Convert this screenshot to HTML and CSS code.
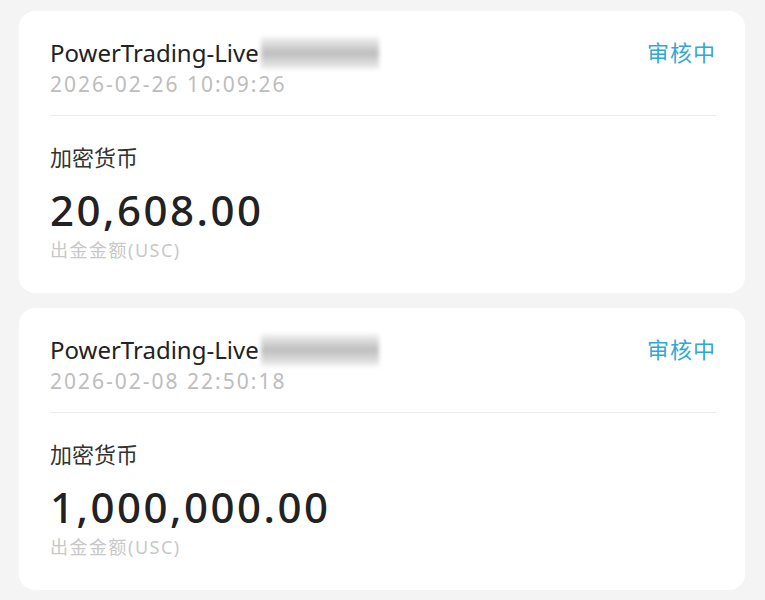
FILE: index.html
```html
<!DOCTYPE html>
<html>
<head>
  <title>出金记录</title>
  <meta name="viewport" content="width=device-width, initial-scale=1.0">
  <link rel="stylesheet" href="styles.css">
</head>
<body>
  <div class="list">
    <div class="card">
      <div class="head">
        <div class="info">
          <div class="account">PowerTrading-Live<span class="mask"></span></div>
          <div class="time">2026-02-26 10:09:26</div>
        </div>
        <div class="status">审核中</div>
      </div>
      <div class="body">
        <div class="method">加密货币</div>
        <div class="amount">20,608.00</div>
        <div class="label">出金金额(USC)</div>
      </div>
    </div>

    <div class="card">
      <div class="head">
        <div class="info">
          <div class="account">PowerTrading-Live<span class="mask"></span></div>
          <div class="time">2026-02-08 22:50:18</div>
        </div>
        <div class="status">审核中</div>
      </div>
      <div class="body">
        <div class="method">加密货币</div>
        <div class="amount">1,000,000.00</div>
        <div class="label">出金金额(USC)</div>
      </div>
    </div>
  </div>
</body>
</html>
```

FILE: styles.css
```css
body {
  margin: 0;
  background-color: #f4f4f4;
  font-family: "Noto Sans", "Noto Sans CJK SC", sans-serif;
}

.list {
  display: flex;
  flex-direction: column;
  gap: 15px;
  padding: 11px 20px 0 19px;
}

.card {
  background-color: #fff;
  border-radius: 16px;
  height: 282px;
  padding: 0 29px 0 31px;
  box-sizing: border-box;
}

.head {
  display: flex;
  justify-content: space-between;
  align-items: flex-start;
  padding-top: 26px;
  height: 105px;
  box-sizing: border-box;
  border-bottom: 1px solid #ececec;
}

.account {
  font-size: 24px;
  line-height: 30px;
  color: #222;
  display: flex;
  align-items: center;
}

.mask {
  display: inline-block;
  width: 118px;
  height: 32px;
  margin-left: 2px;
  background: linear-gradient(180deg, #f2f2f2, #bdbdbd 50%, #eeeeee);
  filter: blur(2px);
}

.time {
  font-size: 21px;
  line-height: 30px;
  color: #bdbdbd;
  letter-spacing: 2px;
}

.status {
  font-size: 22px;
  line-height: 30px;
  color: #2fa8d5;
  letter-spacing: 1px;
}

.body {
  padding-top: 26px;
}

.method {
  font-size: 22px;
  line-height: 30px;
  color: #333;
}

.amount {
  margin-top: 10px;
  font-size: 42px;
  line-height: 56px;
  color: #222;
  font-weight: 500;
  letter-spacing: 2.5px;
}

.label {
  font-size: 18px;
  line-height: 24px;
  color: #c8c8c8;
  letter-spacing: 1.5px;
}
```
